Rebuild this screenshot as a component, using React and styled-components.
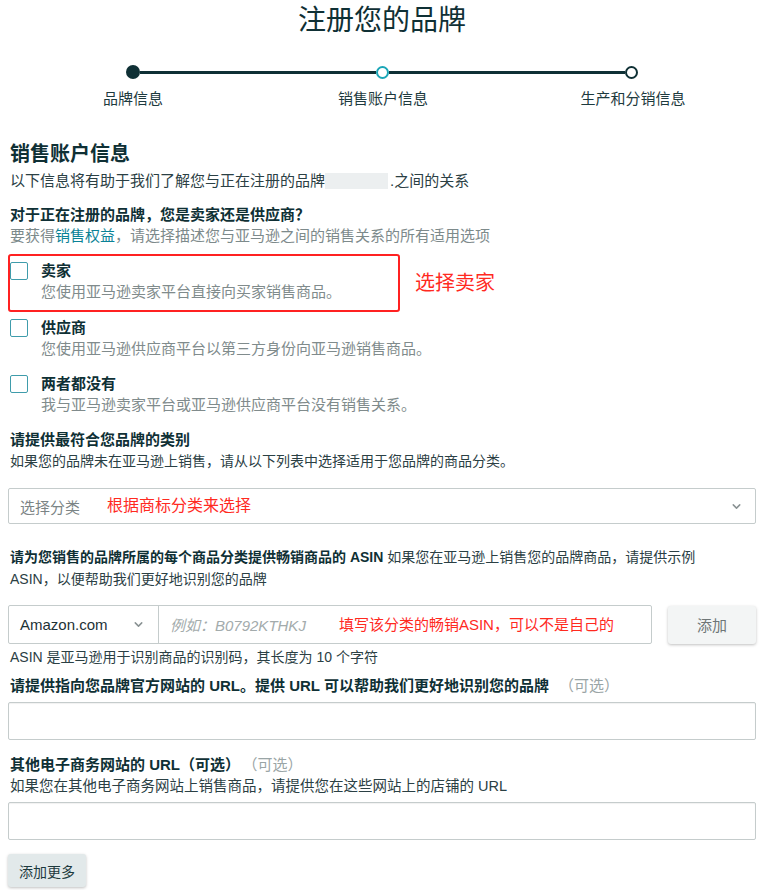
import React from 'react';
import styled, { createGlobalStyle } from 'styled-components';
import { ChevronDown } from 'lucide-react';

const GlobalStyle = createGlobalStyle`
    body {
        margin: 0;
        background: #fff;
        font-family: "Liberation Sans", "Noto Sans CJK SC", sans-serif;
        color: #0f3035;
    }
    * {
        box-sizing: border-box;
    }
`;

const Page = styled.div`
    width: 767px;
    padding: 3px 11px 3px 8px;
`;

const Title = styled.h1`
    margin: 0;
    text-align: center;
    font-size: 28px;
    line-height: 36px;
    font-weight: 400;
    color: #0f3035;
`;

/* stepper */
const Track = styled.div`
    display: flex;
    align-items: center;
    height: 14px;
    margin: 26px 118px 0 118px;
`;

const Dot = styled.span`
    flex: none;
    width: ${p => (p.$state === 'done' ? 14 : 13)}px;
    height: ${p => (p.$state === 'done' ? 14 : 13)}px;
    border-radius: 50%;
    background: ${p => (p.$state === 'done' ? '#0f3035' : '#fff')};
    border: ${p =>
        p.$state === 'done'
            ? 'none'
            : p.$state === 'current'
            ? '2px solid #1aa6b7'
            : '2px solid #0f3035'};
`;

const Line = styled.span`
    flex: 1;
    height: 3px;
    background: #0f3035;
`;

const StepLabels = styled.div`
    display: grid;
    grid-template-columns: repeat(3, 250px);
    margin-top: 10px;
`;

const StepLabel = styled.div`
    text-align: center;
    font-size: 15px;
    line-height: 20px;
    color: #1d3a3e;
`;

/* text */
const Heading = styled.h2`
    margin: 31px 0 0;
    padding-left: 2px;
    font-size: 20px;
    line-height: 28px;
    font-weight: 700;
    color: #0f3035;
`;

const Lead = styled.p`
    margin: 2px 0 0;
    padding-left: 2px;
    font-size: 15px;
    line-height: 22px;
    color: #2b4044;
`;

const Blur = styled.span`
    display: inline-block;
    width: 63px;
    height: 16px;
    vertical-align: -3px;
    background: #eceff0;
    margin-right: 2px;
`;

const Question = styled.p`
    margin: ${p => p.$top ?? 0}px 0 0;
    padding-left: 2px;
    font-size: ${p => p.$size ?? 15}px;
    line-height: 20px;
    font-weight: 700;
    color: #0f3035;
`;

const Hint = styled.p`
    margin: ${p => p.$top ?? 0}px 0 0;
    padding-left: 2px;
    font-size: ${p => p.$size ?? 15}px;
    line-height: 22px;
    color: ${p => (p.$muted ? '#7d8a8b' : '#2b4044')};
`;

const Link = styled.a`
    color: #0a8296;
    text-decoration: none;
`;

const Optional = styled.span`
    margin-left: 10px;
    font-weight: 400;
    color: #9aa5a6;
`;

const Strong = styled.b`
    font-weight: 700;
    color: #0f3035;
`;

/* options */
const Option = styled.div`
    display: flex;
    align-items: flex-start;
    gap: 13px;
    padding-left: 2px;
    margin-top: ${p => p.$top ?? 0}px;
`;

const Checkbox = styled.span`
    flex: none;
    width: 18px;
    height: 18px;
    margin-top: 1px;
    border: 1.5px solid #3f9cab;
    border-radius: 2px;
    background: #fff;
`;

const OptionText = styled.div`
    display: flex;
    flex-direction: column;
`;

const OptionTitle = styled.span`
    font-size: 15px;
    line-height: 20px;
    font-weight: 700;
    color: #0f3035;
`;

const OptionDesc = styled.span`
    font-size: 15px;
    line-height: 22px;
    color: #808b8c;
`;

const HighlightRow = styled.div`
    display: flex;
    align-items: center;
    gap: 15px;
    margin-top: 7px;
`;

const RedBox = styled.div`
    width: 392px;
    border: 2px solid #ff2121;
    border-radius: 3px;
    padding: 5px 0 7px;

    ${Option} {
        padding-left: 0;
    }
`;

const Note = styled.span`
    font-size: ${p => p.$size ?? 16}px;
    line-height: 1;
    color: #ff2a1f;
    white-space: nowrap;
`;

/* fields */
const SelectBox = styled.div`
    display: flex;
    align-items: center;
    gap: 27px;
    height: 36px;
    margin-top: 16px;
    padding: 0 12px 0 11px;
    border: 1px solid #c5cccc;
    border-radius: 2px;
    font-size: 15px;
    color: #7b8485;

    svg {
        margin-left: auto;
    }
`;

const AsinRow = styled.div`
    display: flex;
    align-items: center;
    gap: 16px;
    margin-top: 15px;
`;

const AsinGroup = styled.div`
    display: flex;
    width: 644px;
    height: 39px;
    border: 1px solid #c5cccc;
    border-radius: 2px;
`;

const Market = styled.div`
    display: flex;
    align-items: center;
    justify-content: space-between;
    width: 150px;
    padding: 0 13px 0 11px;
    border-right: 1px solid #c5cccc;
    font-size: 15px;
    color: #1d3236;
`;

const AsinInput = styled.div`
    display: flex;
    align-items: center;
    gap: 33px;
    padding-left: 11px;
    font-size: 15px;
`;

const Placeholder = styled.span`
    font-style: italic;
    color: #a3abac;
`;

const Button = styled.button`
    height: ${p => p.$h ?? 38}px;
    padding: 0 ${p => p.$px ?? 14}px;
    width: ${p => (p.$w ? `${p.$w}px` : 'auto')};
    border: none;
    border-radius: 3px;
    background: ${p => p.$bg ?? '#f3f5f5'};
    box-shadow: 0 1px 3px rgba(0, 0, 0, 0.25);
    font-family: inherit;
    font-size: ${p => p.$size ?? 15}px;
    color: ${p => p.$color ?? '#6f7677'};
    cursor: pointer;
`;

const TextField = styled.div`
    height: 38px;
    margin-top: ${p => p.$top ?? 6}px;
    border: 1px solid #c5cccc;
    border-radius: 2px;
    box-shadow: inset 0 1px 1px rgba(0, 0, 0, 0.06);
`;

const Footer = styled.div`
    margin-top: 14px;
`;

const App = () => {
    return (
        <>
            <GlobalStyle />
            <Page>
                <Title>注册您的品牌</Title>

                <Track>
                    <Dot $state="done" />
                    <Line />
                    <Dot $state="current" />
                    <Line />
                    <Dot $state="todo" />
                </Track>
                <StepLabels>
                    <StepLabel>品牌信息</StepLabel>
                    <StepLabel>销售账户信息</StepLabel>
                    <StepLabel>生产和分销信息</StepLabel>
                </StepLabels>

                <Heading>销售账户信息</Heading>
                <Lead>
                    以下信息将有助于我们了解您与正在注册的品牌<Blur />.之间的关系
                </Lead>

                <Question $top={13}>对于正在注册的品牌，您是卖家还是供应商？</Question>
                <Hint $muted>
                    要获得<Link href="#">销售权益</Link>，请选择描述您与亚马逊之间的销售关系的所有适用选项
                </Hint>

                <HighlightRow>
                    <RedBox>
                        <Option>
                            <Checkbox />
                            <OptionText>
                                <OptionTitle>卖家</OptionTitle>
                                <OptionDesc>您使用亚马逊卖家平台直接向买家销售商品。</OptionDesc>
                            </OptionText>
                        </Option>
                    </RedBox>
                    <Note $size={20}>选择卖家</Note>
                </HighlightRow>

                <Option $top={6}>
                    <Checkbox />
                    <OptionText>
                        <OptionTitle>供应商</OptionTitle>
                        <OptionDesc>您使用亚马逊供应商平台以第三方身份向亚马逊销售商品。</OptionDesc>
                    </OptionText>
                </Option>
                <Option $top={14}>
                    <Checkbox />
                    <OptionText>
                        <OptionTitle>两者都没有</OptionTitle>
                        <OptionDesc>我与亚马逊卖家平台或亚马逊供应商平台没有销售关系。</OptionDesc>
                    </OptionText>
                </Option>

                <Question $top={14}>请提供最符合您品牌的类别</Question>
                <Hint $size={14}>
                    如果您的品牌未在亚马逊上销售，请从以下列表中选择适用于您品牌的商品分类。
                </Hint>
                <SelectBox>
                    <span>选择分类</span>
                    <Note>根据商标分类来选择</Note>
                    <ChevronDown size={13} strokeWidth={2.75} color="#8a9293" />
                </SelectBox>

                <Hint $top={22} $size={14}>
                    <Strong>请为您销售的品牌所属的每个商品分类提供畅销商品的 ASIN</Strong>{' '}
                    如果您在亚马逊上销售您的品牌商品，请提供示例
                    <br />
                    ASIN，以便帮助我们更好地识别您的品牌
                </Hint>
                <AsinRow>
                    <AsinGroup>
                        <Market>
                            <span>Amazon.com</span>
                            <ChevronDown size={13} strokeWidth={2.75} color="#8a9293" />
                        </Market>
                        <AsinInput>
                            <Placeholder>例如：B0792KTHKJ</Placeholder>
                            <Note $size={15}>填写该分类的畅销ASIN，可以不是自己的</Note>
                        </AsinInput>
                    </AsinGroup>
                    <Button $w={88}>添加</Button>
                </AsinRow>
                <Hint $top={2} $size={14}>
                    ASIN 是亚马逊用于识别商品的识别码，其长度为 10 个字符
                </Hint>

                <Question $top={8}>
                    请提供指向您品牌官方网站的 URL。提供 URL 可以帮助我们更好地识别您的品牌
                    <Optional>（可选）</Optional>
                </Question>
                <TextField />

                <Question $top={15}>
                    其他电子商务网站的 URL（可选）<Optional>（可选）</Optional>
                </Question>
                <Hint $size={14.5}>
                    如果您在其他电子商务网站上销售商品，请提供您在这些网站上的店铺的 URL
                </Hint>
                <TextField $top={5} />

                <Footer>
                    <Button $h={33} $px={11} $bg="#e2e9ea" $color="#1d3a3e" $size={14}>
                        添加更多
                    </Button>
                </Footer>
            </Page>
        </>
    );
};

export default App;
